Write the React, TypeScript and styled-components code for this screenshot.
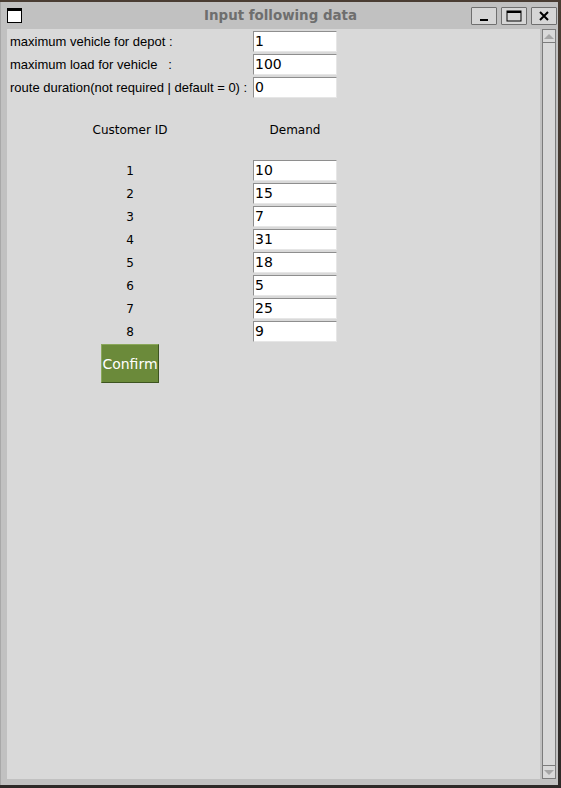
import React from "react";
import styled, { createGlobalStyle } from "styled-components";

const Global = createGlobalStyle`
  html, body { margin: 0; padding: 0; }
  body {
    width: 561px;
    height: 788px;
    overflow: hidden;
    background: linear-gradient(180deg, #4a3d33 0%, #2e2a28 100%);
    font-family: "DejaVu Sans", sans-serif;
  }
`;

const Window = styled.div`
  margin-top: 2px;
  width: 558px;
  height: 783px;
  background: #c1c1c1;
  border-left: 1px solid #a8a8a8;
  box-sizing: border-box;
  display: flex;
  flex-direction: column;
`;

const TitleBar = styled.div`
  height: 27px;
  display: flex;
  align-items: center;
  position: relative;
  padding: 0 0 0 6px;
`;

const AppIcon = styled.div`
  width: 13px;
  height: 11px;
  border: 1px solid #000;
  border-top-width: 3px;
  background: #fff;
`;

const Title = styled.div`
  position: absolute;
  left: 2px;
  right: 0;
  top: 6px;
  text-align: center;
  font: bold 13.4px "DejaVu Sans", sans-serif;
  color: #6e6e6e;
  pointer-events: none;
`;

const TitleButtons = styled.div`
  margin-left: auto;
  display: flex;
  gap: 4px;
  margin-right: 1px;
  margin-top: 1px;
`;

const TitleButton = styled.div`
  width: 24px;
  height: 16px;
  border: 1px solid #6f6f6f;
  border-radius: 1px;
  background: #d6d6d6;
  display: flex;
  align-items: center;
  justify-content: center;
`;

const Body = styled.div`
  flex: 1;
  display: flex;
  padding: 0 2px 6px 6px;
  gap: 2px;
  min-height: 0;
`;

const Content = styled.div`
  flex: 1;
  background: #d9d9d9;
  display: grid;
  grid-template-columns: 246px 84px;
  grid-auto-rows: min-content;
  align-content: start;
  padding-top: 1px;
`;

const Label = styled.div<{ $center?: boolean; $h?: number }>`
  height: ${(p) => p.$h ?? 23}px;
  display: flex;
  align-items: center;
  justify-content: ${(p) => (p.$center ? "center" : "flex-start")};
  padding-left: ${(p) => (p.$center ? 0 : 3)}px;
  font: ${(p) =>
    p.$center ? '12px "DejaVu Sans", sans-serif' : '13px "Liberation Sans", Arial, sans-serif'};
  color: #000;
  white-space: pre;
`;

const EntryCell = styled.div`
  height: 23px;
  display: flex;
  align-items: center;
`;

const Entry = styled.div`
  box-sizing: border-box;
  width: 84px;
  height: 21px;
  background: #fff;
  border-top: 1px solid #8e8e8e;
  border-left: 1px solid #8e8e8e;
  border-bottom: 1px solid #e6e6e6;
  border-right: 1px solid #e6e6e6;
  font: 14px "DejaVu Sans", sans-serif;
  color: #000;
  padding-left: 1px;
  line-height: 19px;
`;

const ButtonCell = styled.div`
  display: flex;
  justify-content: center;
  padding-top: 1px;
`;

const ConfirmButton = styled.div`
  box-sizing: border-box;
  width: 58px;
  height: 39px;
  background: #6b8a3a;
  border: 1px solid #8aa75a;
  border-right-color: #3d5420;
  border-bottom-color: #3d5420;
  color: #fff;
  font: 14px "DejaVu Sans", sans-serif;
  display: flex;
  align-items: center;
  justify-content: center;
`;

const Scrollbar = styled.div`
  width: 14px;
  box-sizing: border-box;
  border: 1px solid #7c7c7c;
  background: #d9d9d9;
  display: flex;
  flex-direction: column;
  justify-content: space-between;
`;

const Arrow = styled.div<{ $down?: boolean }>`
  height: 13px;
  box-sizing: border-box;
  border-bottom: ${(p) => (p.$down ? "none" : "1px solid #7c7c7c")};
  border-top: ${(p) => (p.$down ? "1px solid #7c7c7c" : "none")};
  display: flex;
  align-items: center;
  justify-content: center;
  &::after {
    content: "";
    width: 0;
    height: 0;
    border-left: 5px solid transparent;
    border-right: 5px solid transparent;
    ${(p) =>
      p.$down
        ? "border-top: 5px solid #a6a6a6;"
        : "border-bottom: 5px solid #a6a6a6;"}
  }
`;

const top = [
  ["maximum vehicle for depot :", "1"],
  ["maximum load for vehicle   :", "100"],
  ["route duration(not required | default = 0) :", "0"],
];
const demands = ["10", "15", "7", "31", "18", "5", "25", "9"];

export default function App() {
  return (
    <>
      <Global />
      <Window>
        <TitleBar>
          <AppIcon />
          <Title>Input following data</Title>
          <TitleButtons>
            <TitleButton>
              <svg width="12" height="12" viewBox="0 0 12 12">
                <rect x="2" y="9" width="8" height="2" fill="#000" />
              </svg>
            </TitleButton>
            <TitleButton>
              <svg width="16" height="12" viewBox="0 0 16 12">
                <rect x="1" y="1" width="14" height="10" fill="none" stroke="#000" strokeWidth="1" />
                <rect x="1" y="1" width="14" height="2" fill="#000" />
              </svg>
            </TitleButton>
            <TitleButton>
              <svg width="12" height="12" viewBox="0 0 12 12">
                <path d="M2 2 L10 10 M10 2 L2 10" stroke="#000" strokeWidth="2" />
              </svg>
            </TitleButton>
          </TitleButtons>
        </TitleBar>
        <Body>
          <Content>
            {top.map(([l, v]) => (
              <React.Fragment key={l}>
                <Label>{l}</Label>
                <EntryCell>
                  <Entry>{v}</Entry>
                </EntryCell>
              </React.Fragment>
            ))}
            <Label $h={20} />
            <Label $h={20} />
            <Label $center $h={21}>Customer ID</Label>
            <Label $center $h={21}>Demand</Label>
            <Label $h={19} />
            <Label $h={19} />
            {demands.map((d, i) => (
              <React.Fragment key={i}>
                <Label $center>{i + 1}</Label>
                <EntryCell>
                  <Entry>{d}</Entry>
                </EntryCell>
              </React.Fragment>
            ))}
            <ButtonCell>
              <ConfirmButton>Confirm</ConfirmButton>
            </ButtonCell>
          </Content>
          <Scrollbar>
            <Arrow />
            <Arrow $down />
          </Scrollbar>
        </Body>
      </Window>
    </>
  );
}
